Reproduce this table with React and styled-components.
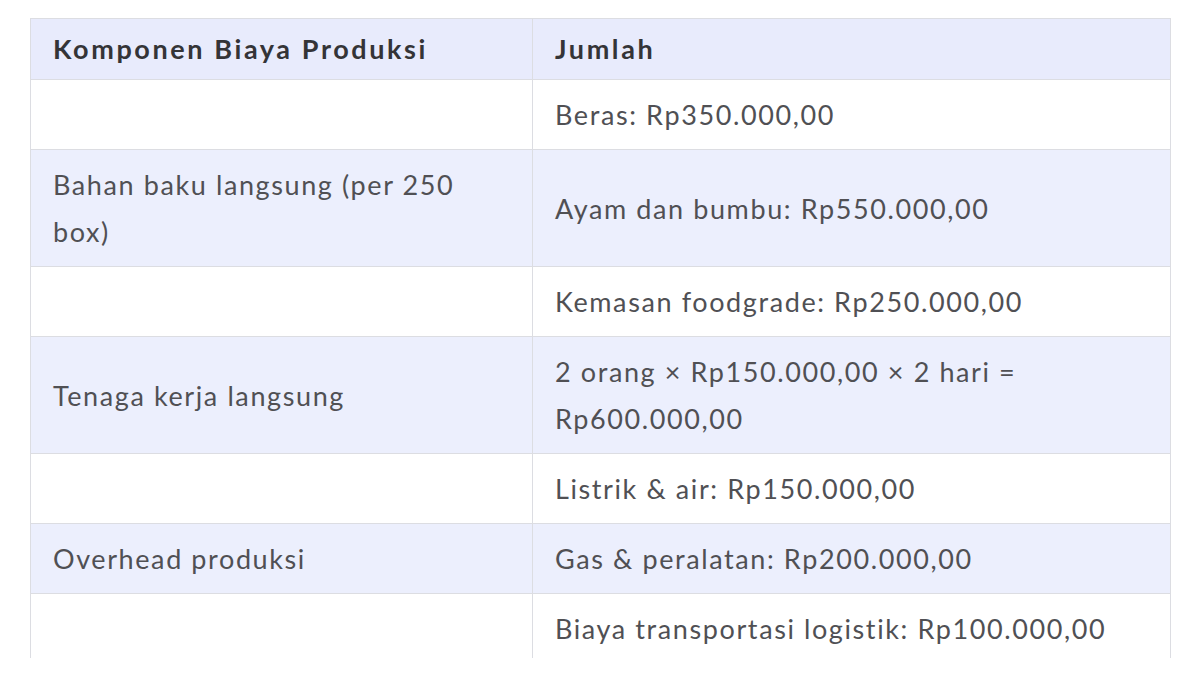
import React from "react";
import styled, { createGlobalStyle } from "styled-components";

const Global = createGlobalStyle`
  html, body { margin: 0; padding: 0; background: #ffffff; }
  body { font-family: Lato, "Open Sans", sans-serif; }
`;

const Page = styled.div`
  padding: 18px 29px 0 30px;
`;

const Clip = styled.div`
  height: 640px;
  overflow: hidden;
`;

const Table = styled.table`
  width: 1141px;
  border-collapse: collapse;
  table-layout: fixed;
  font-family: Lato, "Open Sans", sans-serif;
  font-size: 27px;
  color: #505054;
`;

const HeadCell = styled.th`
  background: #e8ebfc;
  border: 1px solid #dcdde2;
  text-align: left;
  font-weight: 700;
  color: #343437;
  letter-spacing: 2.6px;
  padding: 6px 22px 7px;
  line-height: 47px;
  width: ${(p) => p.$w || "auto"};
`;

const Row = styled.tr`
  background: ${(p) => (p.$alt ? "#eceffd" : "#ffffff")};
`;

const Cell = styled.td`
  border: 1px solid #dcdde2;
  padding: 11px 22px;
  line-height: 47px;
  vertical-align: middle;
  letter-spacing: 1.6px;
`;

const rows = [
  ["", "Beras: Rp350.000,00"],
  ["Bahan baku langsung (per 250 box)", "Ayam dan bumbu: Rp550.000,00"],
  ["", "Kemasan foodgrade: Rp250.000,00"],
  ["Tenaga kerja langsung", "2 orang × Rp150.000,00 × 2 hari = Rp600.000,00"],
  ["", "Listrik & air: Rp150.000,00"],
  ["Overhead produksi", "Gas & peralatan: Rp200.000,00"],
  ["", "Biaya transportasi logistik: Rp100.000,00"],
];

export default function App() {
  return (
    <Page>
      <Global />
      <Clip>
        <Table>
          <thead>
            <tr>
              <HeadCell $w="457px">Komponen Biaya Produksi</HeadCell>
              <HeadCell>Jumlah</HeadCell>
            </tr>
          </thead>
          <tbody>
            {rows.map((r, i) => (
              <Row key={i} $alt={i % 2 === 1}>
                <Cell>{r[0]}</Cell>
                <Cell>{r[1]}</Cell>
              </Row>
            ))}
          </tbody>
        </Table>
      </Clip>
    </Page>
  );
}
